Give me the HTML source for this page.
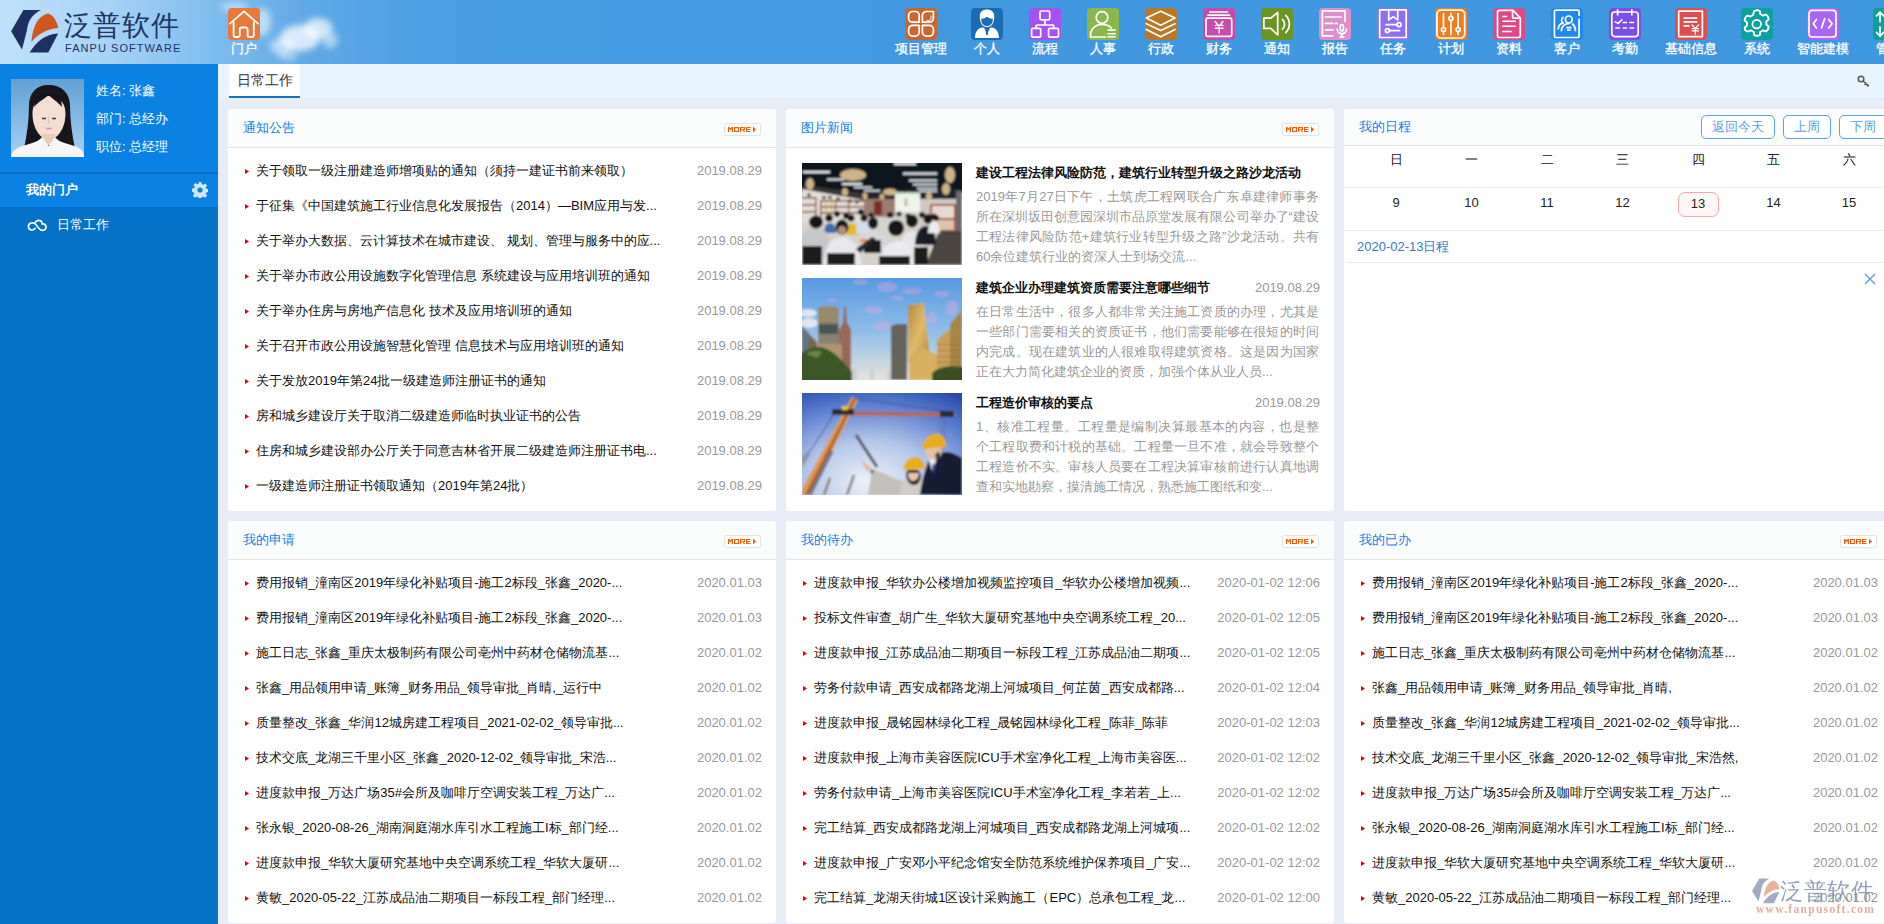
<!DOCTYPE html><html><head><meta charset="utf-8"><style>
*{margin:0;padding:0;box-sizing:border-box}
html,body{width:1884px;height:924px;overflow:hidden;background:#e8ecf6;font-family:"Liberation Sans",sans-serif;font-size:13px;color:#222}
#hdr{position:absolute;left:0;top:0;width:1884px;height:64px;background:linear-gradient(90deg,#c0e1fa 0px,#a9d4f6 100px,#84bfef 200px,#62aae7 300px,#4c9fe3 420px,#4499e0 650px,#3f97df 1884px);overflow:hidden}
.cloud{position:absolute;border-radius:50%;background:radial-gradient(closest-side,rgba(255,255,255,.85),rgba(255,255,255,0))}
.logoTxt{position:absolute;left:64px;top:9px;font-size:28px;color:#1e3466;letter-spacing:1px;font-weight:500;line-height:34px}
.logoEn{position:absolute;left:65px;top:42px;font-size:11px;color:#1e3466;letter-spacing:1.05px;line-height:13px}
.nav{position:absolute;top:0;height:64px}
.nav .ic{position:absolute;left:50%;margin-left:-16px;top:8px;width:32px;height:32px;border-radius:4px}
.nav .ic svg{display:block}
.nav .nl{position:absolute;left:-10px;right:-10px;top:41px;text-align:center;color:#fff;font-size:12.5px;-webkit-text-stroke:.3px #fff;line-height:16px;white-space:nowrap}
#side{position:absolute;left:0;top:64px;width:218px;height:860px;background:#0571c7}
#side .top{position:absolute;left:0;top:0;width:218px;height:110px;background:#0a82e4;border-bottom:2px solid #0a6cbd}
#side .port{position:absolute;left:0;top:110px;width:218px;height:33px;background:#0a82e4}
#tabbar{position:absolute;left:218px;top:64px;width:1666px;height:34px;background:#e7f4fd}
.tab{position:absolute;left:229px;top:64px;width:71px;height:34px;background:#fff;border-bottom:2px solid #1673c4;font-size:14px;color:#333;text-align:center;line-height:32px}
.panel{position:absolute;background:#fff;border-radius:3px;overflow:hidden}
.ph{position:absolute;left:0;top:0;right:0;height:39px;background:#fbfdfc;border-bottom:1px solid #e6e6e6}
.pt{position:absolute;left:15px;top:0;line-height:37px;color:#1a7ee8;font-size:13px}
.more{position:absolute;top:14px}
.li{position:absolute;left:0;right:0;height:35px;line-height:35px;white-space:nowrap}
.tri{position:absolute;left:17px;top:16px;width:4px;height:5px;background:#e60000;clip-path:polygon(0 0,100% 50%,0 100%)}
.lt{position:absolute;left:28px;top:0;overflow:hidden;color:#111}
.ld{position:absolute;right:14px;top:0;color:#999}

.cbtn{position:absolute;top:6px;height:24px;border:1px solid #5aa3ea;border-radius:5px;color:#5aa3ea;text-align:center;line-height:22px;font-size:13px;background:#fff}
</style></head><body><div id="hdr">
<svg style="position:absolute;left:210px;top:0" width="150" height="64" viewBox="0 0 150 64"><defs><filter id="cb" x="-50%" y="-50%" width="200%" height="200%"><feGaussianBlur stdDeviation="3"/></filter></defs><g fill="#fff" filter="url(#cb)"><ellipse cx="25" cy="7" rx="14" ry="5" opacity=".45"/><ellipse cx="52" cy="22" rx="9" ry="14" opacity=".55"/><ellipse cx="90" cy="38" rx="20" ry="13" opacity=".75"/><ellipse cx="108" cy="28" rx="14" ry="10" opacity=".7"/><ellipse cx="72" cy="46" rx="12" ry="8" opacity=".55"/><ellipse cx="78" cy="56" rx="10" ry="5" opacity=".4"/><ellipse cx="120" cy="40" rx="8" ry="8" opacity=".5"/></g></svg>
<svg style="position:absolute;left:0;top:0" width="64" height="64" viewBox="0 0 64 64"><path fill="#1e3060" d="M23.4 10H41C33 14 28 20 27 30L22 49.4 11.1 31.3Z"/><path fill="#d0561e" d="M31.3 42C33 26 38 16 48 13.6 53 15 57 21 58.2 28 47 29 38 34 31.3 42Z"/><path fill="#1e3060" d="M29.7 52.5H48.3L58.2 33.4C45 34 36 42 29.7 52.5Z"/></svg>
<div class="logoTxt">泛普软件</div><div class="logoEn">FANPU SOFTWARE</div>
<div class="nav" style="left:218px;width:52px"><div class="ic" style="background:#e8793c;border-radius:4px"><svg width="32" height="32" viewBox="0 0 32 32"><g fill="none" stroke="#fff" stroke-width="1.8" stroke-linejoin="round" stroke-linecap="round"><path d="M2 15.6L16 3.4l14 12.2"/><path d="M5.6 14.5V27a2 2 0 0 0 2 2h2.4a1.8 1.8 0 0 0 1.8-1.8V21.3a1.8 1.8 0 0 1 1.8-1.8h4.2a1.8 1.8 0 0 1 1.8 1.8v5.9a1.8 1.8 0 0 0 1.8 1.8h2.4a2 2 0 0 0 2-2V14.5"/></g></svg></div><div class="nl">门户</div></div>
<div class="nav" style="left:884px;width:74px"><div class="ic" style="background:#cb6631"><svg width="32" height="32" viewBox="0 0 32 32"><g fill="none" stroke="#fff" stroke-width="1.7" stroke-linecap="round" stroke-linejoin="round" stroke-width="1.6"><path d="M3.6 7.5a4 4 0 0 1 4-4h2.6a4 4 0 0 1 4 4v6.7H7.6a4 4 0 0 1-4-4z"/><path d="M17.4 7.5a4 4 0 0 1 4-4h7v6.7a4 4 0 0 1-4 4h-7z"/><path d="M3.6 21.4a4 4 0 0 1 4-4h6.6v6.7a4 4 0 0 1-4 4H7.6a4 4 0 0 1-4-4z"/><path d="M17.4 17.4h7a4 4 0 0 1 4 4v2.7a4 4 0 0 1-4 4h-3a4 4 0 0 1-4-4z"/><path d="M26 8v2.5a2 2 0 0 1-2 2h-2" stroke-width=".9"/></g></svg></div><div class="nl">项目管理</div></div>
<div class="nav" style="left:958px;width:58px"><div class="ic" style="background:#1c6cb4"><svg width="32" height="32" viewBox="0 0 32 32"><path fill="#fff" d="M16 1.5c-4.4 0-7.2 2.6-7.2 6.4v2.6c0 .9.2 1.6.5 2.2.5 3.5 3 6.3 6.7 6.3s6.2-2.8 6.7-6.3c.3-.6.5-1.3.5-2.2V7.9c0-3.8-2.8-6.4-7.2-6.4z"/><path fill="#1c6cb4" d="M10.3 10.6c1.6.4 3.6-.3 5.7-1.8 2.1 1.5 4.1 2.2 5.7 1.8v1.6c0 3.2-2.3 5.8-5.7 5.8s-5.7-2.6-5.7-5.8z"/><path fill="#fff" d="M4 30c.3-5 1.6-8.4 5.6-10.2l3.4-.2 3 7.2 3-7.2 3.4.2c4 1.8 5.3 5.2 5.6 10.2z"/><path fill="#1c6cb4" d="M14.6 19.8h2.8l-.6 2 .4 4.2-1.2 1.6-1.2-1.6.4-4.2z"/></svg></div><div class="nl">个人</div></div>
<div class="nav" style="left:1016px;width:58px"><div class="ic" style="background:#a452f2"><svg width="32" height="32" viewBox="0 0 32 32"><g fill="none" stroke="#fff" stroke-width="1.7" stroke-linecap="round" stroke-linejoin="round" stroke-width="1.8"><rect x="11" y="3" width="9.7" height="8.9" rx="1.3"/><path d="M15.9 11.9v5.1M7.2 20.4v-2.4a1 1 0 0 1 1-1h15.5a1 1 0 0 1 1 1v2.4"/><rect x="2.6" y="20.4" width="9.1" height="8.8" rx="1.3"/><rect x="19.6" y="20.4" width="9.9" height="8.8" rx="1.3"/></g></svg></div><div class="nl">流程</div></div>
<div class="nav" style="left:1074px;width:58px"><div class="ic" style="background:#8ab84c"><svg width="32" height="32" viewBox="0 0 32 32"><g fill="none" stroke="#fff" stroke-width="1.7" stroke-linecap="round" stroke-linejoin="round" stroke-width="1.7"><circle cx="15" cy="9.5" r="5.8"/><path d="M18.6 29H3.5c-.6-7.4 4.7-12.6 11.5-12.6 4 0 7.4 1.5 9.4 3.6"/></g><g fill="#fff"><rect x="20.2" y="21.2" width="8.7" height="1.7" rx=".8"/><rect x="20.2" y="24.9" width="8.7" height="1.7" rx=".8"/><rect x="20.2" y="27.9" width="8.7" height="1.7" rx=".8"/></g></svg></div><div class="nl">人事</div></div>
<div class="nav" style="left:1132px;width:58px"><div class="ic" style="background:#b87828"><svg width="32" height="32" viewBox="0 0 32 32"><g fill="none" stroke="#fff" stroke-width="1.7" stroke-linecap="round" stroke-linejoin="round" stroke-width="1.4"><path d="M15.7 3.2L30 10.1 15.7 17.2 1.3 10.1z"/><path d="M1.3 15.7l14.4 6.9 14.3-6.9"/><path d="M1.3 21.5l14.4 7.2 14.3-7.2"/></g></svg></div><div class="nl">行政</div></div>
<div class="nav" style="left:1190px;width:58px"><div class="ic" style="background:#c84aab"><svg width="32" height="32" viewBox="0 0 32 32"><g fill="none" stroke="#fff" stroke-width="1.7" stroke-linecap="round" stroke-linejoin="round" stroke-width="1.6"><rect x="3" y="10.1" width="25.7" height="18.3" rx="1.6"/><path d="M6.9 4h17.8M5 7.2h21.5"/><path d="M12.2 13.5l4 4.8 3.7-4.8M16.2 18.3V25M12.4 17.4h7.6M12.4 20.3h7.6" stroke-width="1.4"/></g></svg></div><div class="nl">财务</div></div>
<div class="nav" style="left:1248px;width:58px"><div class="ic" style="background:#6a9522"><svg width="32" height="32" viewBox="0 0 32 32"><g fill="none" stroke="#fff" stroke-width="1.7" stroke-linecap="round" stroke-linejoin="round" stroke-width="1.5"><path d="M2.9 10.1h6.9l6.9-5.6v22.5l-6.9-6.6H2.9z"/><path d="M21.5 11.4a6.5 6.5 0 0 1 0 9.6M24.7 7.4a12 12 0 0 1 0 17.3"/></g></svg></div><div class="nl">通知</div></div>
<div class="nav" style="left:1306px;width:58px"><div class="ic" style="background:#dc8fc8"><svg width="32" height="32" viewBox="0 0 32 32"><g fill="none" stroke="#fff" stroke-width="1.7" stroke-linecap="round" stroke-linejoin="round" stroke-width="1.9" stroke-linecap="butt" stroke-linejoin="miter"><path d="M26 13.5V2.9H3.4v25h10.1"/><path d="M6.4 9h15.6M6.4 15.4h7.6M6.4 21.8h7.6M16.5 15.4h1.8"/></g><g fill="none" stroke="#fff" stroke-width="1.7" stroke-linecap="round" stroke-linejoin="round" stroke-width="1.5"><rect x="21.2" y="16.7" width="3.2" height="6.3" rx="1.6"/><path d="M18.2 21a4.6 4.6 0 0 0 9.3 0M22.8 25.6v2.8M21 29h3.8"/></g></svg></div><div class="nl">报告</div></div>
<div class="nav" style="left:1364px;width:58px"><div class="ic" style="background:#8f6ef4"><svg width="32" height="32" viewBox="0 0 32 32"><g fill="none" stroke="#fff" stroke-width="1.7" stroke-linecap="round" stroke-linejoin="round" stroke-width="1.9" stroke-linecap="butt" stroke-linejoin="miter"><rect x="2.7" y="1.8" width="26.5" height="27.7"/><path d="M11.7 1.8v10.1l4.5-3.1 4.5 3.1V1.8"/></g><g fill="none" stroke="#fff" stroke-width="1.7" stroke-linecap="round" stroke-linejoin="round" stroke-width="1.5"><path d="M9 16.7h11M12.4 22.6h10.2"/><circle cx="22" cy="16.7" r="2"/><circle cx="10.4" cy="22.6" r="2"/></g></svg></div><div class="nl">任务</div></div>
<div class="nav" style="left:1422px;width:58px"><div class="ic" style="background:#f07e1e"><svg width="32" height="32" viewBox="0 0 32 32"><g fill="none" stroke="#fff" stroke-width="1.7" stroke-linecap="round" stroke-linejoin="round" stroke-width="1.9"><rect x="1.9" y="2.1" width="27.8" height="27.9" rx="4"/></g><g fill="none" stroke="#fff" stroke-width="1.7" stroke-linecap="round" stroke-linejoin="round" stroke-width="1.3"><path d="M8.5 5.6v13.8M8.5 23.5v3M15.9 5.6v2.8M15.9 12.4v14.1M23.1 5.6v13.8M23.1 23.5v3"/><circle cx="8.5" cy="21.5" r="2"/><circle cx="15.9" cy="10.4" r="2"/><circle cx="23.1" cy="21.5" r="2"/></g></svg></div><div class="nl">计划</div></div>
<div class="nav" style="left:1480px;width:58px"><div class="ic" style="background:#dc4a88"><svg width="32" height="32" viewBox="0 0 32 32"><g fill="none" stroke="#fff" stroke-width="1.7" stroke-linecap="round" stroke-linejoin="round" stroke-width="1.8"><path d="M6.5 2.4h13.7l7.1 7.7v17.4a2 2 0 0 1-2 2H6.5a2 2 0 0 1-2-2V4.4a2 2 0 0 1 2-2z"/><path d="M19.6 2.6v6.5a1 1 0 0 0 1 1h6.5"/><path d="M9.8 8.5h3.7M9.8 13.3h12.5M9.8 18.3h12.5M9.8 23.4h8.5" stroke-width="1.5"/></g></svg></div><div class="nl">资料</div></div>
<div class="nav" style="left:1538px;width:58px"><div class="ic" style="background:#2088f0"><svg width="32" height="32" viewBox="0 0 32 32"><g fill="none" stroke="#fff" stroke-width="1.7" stroke-linecap="round" stroke-linejoin="round" stroke-width="1.7" stroke-linecap="butt"><path d="M28.1 7.2V3.6a1.5 1.5 0 0 0-1.5-1.5H4.9a1.5 1.5 0 0 0-1.5 1.5V28a1.5 1.5 0 0 0 1.5 1.5h21.7a1.5 1.5 0 0 0 1.5-1.5V11.4"/></g><g fill="none" stroke="#fff" stroke-width="1.7" stroke-linecap="round" stroke-linejoin="round" stroke-width="1.4"><circle cx="17.8" cy="11.4" r="3.4"/><path d="M10.4 22.6a7.6 7.6 0 0 1 7.4-7.3M21.5 16a8 8 0 0 1 2.9 6.6M7.2 20.7a7 7 0 0 1 5-5.8M12 9.4a3.6 3.6 0 0 0-.6 5M15.9 19.6h4M16.6 22h2.6"/></g></svg></div><div class="nl">客户</div></div>
<div class="nav" style="left:1596px;width:58px"><div class="ic" style="background:#7a4ee8"><svg width="32" height="32" viewBox="0 0 32 32"><g fill="none" stroke="#fff" stroke-width="1.7" stroke-linecap="round" stroke-linejoin="round" stroke-width="1.9"><rect x="2.8" y="4" width="26.4" height="24.6" rx="3"/><path d="M8.6 1.8v5M22.8 1.8v5"/><path d="M6.2 13.9l3 1.5 3.7-3.7" stroke-width="1.6"/><path d="M14.2 14.5h3.3M20.9 14.5h3.7M6.8 20h3.7M14.2 20h3.3M20.9 20h3.7" stroke-width="1.6"/></g></svg></div><div class="nl">考勤</div></div>
<div class="nav" style="left:1654px;width:74px"><div class="ic" style="background:#de4e4e"><svg width="32" height="32" viewBox="0 0 32 32"><g fill="none" stroke="#fff" stroke-width="1.7" stroke-linecap="round" stroke-linejoin="round" stroke-width="2.1" stroke-linecap="butt" stroke-linejoin="miter"><rect x="3.7" y="3.1" width="23.7" height="25.5"/></g><g fill="none" stroke="#fff" stroke-width="1.7" stroke-linecap="round" stroke-linejoin="round" stroke-width="1.6"><path d="M9.2 10.2h12.4M9.2 13.9h12.4M9.2 17.9h4.7"/><path d="M16.9 16.9l3.4 3.4 3.4-3.4M20.3 20.3v5.9M17.2 20.6h6.3M17.2 22.8h6.3" stroke-width="1.3"/></g></svg></div><div class="nl">基础信息</div></div>
<div class="nav" style="left:1728px;width:58px"><div class="ic" style="background:#0ea09e"><svg width="32" height="32" viewBox="0 0 32 32"><g fill="none" stroke="#fff" stroke-width="1.7" stroke-linecap="round" stroke-linejoin="round" stroke-width="1.5"><path d="M13.2 3.4c1.6-.9 3.6-.9 5.2 0l.4 2.8c.9.3 1.7.8 2.4 1.4l2.6-1c1.6.9 2.6 2.6 2.6 4.5l-2.2 1.8c.2.9.2 1.9 0 2.8l2.2 1.8c0 1.9-1 3.6-2.6 4.5l-2.6-1c-.7.6-1.5 1.1-2.4 1.4l-.4 2.8c-1.6.9-3.6.9-5.2 0l-.4-2.8c-.9-.3-1.7-.8-2.4-1.4l-2.6 1C5.6 22 4.6 20.3 4.6 18.4l2.2-1.8c-.2-.9-.2-1.9 0-2.8L4.6 12c0-1.9 1-3.6 2.6-4.5l2.6 1c.7-.6 1.5-1.1 2.4-1.4z" transform="translate(16 16) scale(1.1) translate(-15.8 -15.2)"/><circle cx="15.7" cy="16.1" r="4.3"/></g></svg></div><div class="nl">系统</div></div>
<div class="nav" style="left:1786px;width:74px"><div class="ic" style="background:#a866f6"><svg width="32" height="32" viewBox="0 0 32 32"><g fill="none" stroke="#fff" stroke-width="1.7" stroke-linecap="round" stroke-linejoin="round" stroke-width="2.3"><rect x="2" y="2.4" width="27" height="26.6" rx="3"/></g><g fill="none" stroke="#fff" stroke-width="1.7" stroke-linecap="round" stroke-linejoin="round" stroke-width="1.7"><path d="M9.4 11.4L6.3 15.7l3.1 4.3M21.6 11.4l3.5 4.3-3.5 4.3M17.7 10.6L14.5 20"/></g></svg></div><div class="nl">智能建模</div></div>
<div class="nav" style="left:1860px;width:58px"><div class="ic" style="background:#0ea094"><svg width="32" height="32" viewBox="0 0 32 32"><g fill="none" stroke="#fff" stroke-width="1.7" stroke-linecap="round" stroke-linejoin="round" stroke-width="1.8"><path d="M7 4v9.7M3.5 7.9L7 4l3.6 3.9M7 18.9v9.4M3.5 24.4L7 28.3l3.6-3.9"/></g></svg></div><div class="nl">管理</div></div>
</div>
<div id="side"><div class="top"></div><div class="port"></div>
<svg style="position:absolute;left:11px;top:15px" width="73" height="78" viewBox="0 0 73 78"><defs><linearGradient id="avbg" x1="0" y1="0" x2="0" y2="1"><stop offset="0" stop-color="#62a0d4"/><stop offset="1" stop-color="#a6d2f4"/></linearGradient><filter id="avb" x="0" y="0" width="100%" height="100%"><feGaussianBlur stdDeviation=".6"/></filter></defs><rect width="73" height="78" fill="url(#avbg)"/><g filter="url(#avb)"><path fill="#17121a" d="M37.5 6C25 6 18 14 18 27c0 14-2 28-5 43l12 1h26l13-1c-3-15-5-29-5-43 0-13-8-21-21.5-21z"/><path fill="#f4ddd2" d="M37.5 17c-4 0-7 2-9 3-5 3-7 8-7 15 0 13 7 25 16.5 26 9.5-1 16.5-13 16.5-26 0-7-2-12-7-15-2-1-5-3-10-3z"/><path fill="#17121a" d="M37 16c-3 4-9 6-14 12l1-8c4-3 9-5 13-4zM38 16c3 4 8 6 13 12l-1-8c-4-3-8-5-12-4z"/><path fill="#eccabc" d="M31 55h13v11H31z"/><path fill="#f6f6f8" d="M0 78c1-7 7-10 18-13 7-2 11-4 13-7l6.5 9 6.5-9c2 3 6 5 13 7 11 3 16 6 16 13z"/><path d="M31 39.5h4M41 39.5h4" stroke="#4a3a3a" stroke-width="1.3"/><path d="M35 49.5h6" stroke="#e0959a" stroke-width="1.5"/><path d="M37.5 37v8" stroke="#e6c4b8" stroke-width="1.2"/></g></svg>
<div style="position:absolute;left:96px;top:13px;color:#fff;font-size:13px;line-height:28px">姓名: 张鑫<br>部门: 总经办<br>职位: 总经理</div>
<div style="position:absolute;left:26px;top:109px;line-height:33px;color:#fff;font-weight:bold;font-size:13px">我的门户</div>
<svg style="position:absolute;left:192px;top:118px" width="16" height="16" viewBox="0 0 16 16"><path fill="#cfe6fb" d="M6.6 0h2.8l.4 2.2 1.4.6 1.9-1.3 2 2-1.3 1.9.6 1.4 2.2.4v2.8l-2.2.4-.6 1.4 1.3 1.9-2 2-1.9-1.3-1.4.6-.4 2.2H6.6l-.4-2.2-1.4-.6-1.9 1.3-2-2 1.3-1.9-.6-1.4L0 9.4V6.6l2.2-.4.6-1.4-1.3-1.9 2-2 1.9 1.3 1.4-.6z"/><circle cx="8" cy="8" r="2.6" fill="#0a82e4"/></svg>
<svg style="position:absolute;left:24px;top:150px" width="28" height="22" viewBox="0 0 28 22"><path fill="none" stroke="#fff" stroke-width="1.7" stroke-linecap="round" d="M11.4 14.3C9 17 4.4 16.5 4.4 12.6 4.4 8.5 9.5 7.8 11.8 10.5L15.5 15C17.5 17 22 17 22 13 22 10.5 20 9.7 18.3 10 18 7 16.7 6.3 14.5 6.3 13 6.3 12 7 11.3 8.5"/></svg>
<div style="position:absolute;left:57px;top:145px;line-height:32px;color:#fff;font-size:13.4px">日常工作</div>
</div>
<div id="tabbar"></div><div class="tab">日常工作</div>
<svg style="position:absolute;left:1857px;top:75px" width="14" height="12" viewBox="0 0 14 12"><g fill="none" stroke="#555" stroke-width="1.5"><circle cx="4" cy="4" r="2.8"/><path d="M6 6l6 5M9 8.5l-1.5 1.5M11 10l-1.2 1.2"/></g></svg>
<div class="panel" style="left:228px;top:109px;width:548px;height:402px"><div class="ph"><div class="pt">通知公告</div><svg class="more" style="left:496px" width="37" height="13" viewBox="0 0 37 13"><rect x="0.5" y="0.5" width="36" height="12" rx="2" fill="#fff" stroke="#e2e2e2"/><g fill="#ff5a00"><path d="M4 4h1.2l1.3 1.5L7.8 4H9v5H7.8V5.8L6.5 7.2 5.2 5.8V9H4z"/><path d="M10 4h5v5h-5zM11.2 5v3h2.6V5z"/><path d="M16 4h5v3h-1l1 2h-1.3l-1-2H17.2v2H16zM17.2 5v1.2h2.6V5z"/><path d="M22 4h4.5v1h-3.3v1h3v1h-3v1h3.3v1H22z"/><path d="M29 3.5l3 3-3 3z"/></g></svg></div><div class="li" style="top:44px"><i class="tri"></i><span class="lt">关于领取一级注册建造师增项贴的通知（须持一建证书前来领取）</span><span class="ld">2019.08.29</span></div><div class="li" style="top:79px"><i class="tri"></i><span class="lt">于征集《中国建筑施工行业信息化发展报告（2014）—BIM应用与发...</span><span class="ld">2019.08.29</span></div><div class="li" style="top:114px"><i class="tri"></i><span class="lt">关于举办大数据、云计算技术在城市建设、 规划、管理与服务中的应...</span><span class="ld">2019.08.29</span></div><div class="li" style="top:149px"><i class="tri"></i><span class="lt">关于举办市政公用设施数字化管理信息 系统建设与应用培训班的通知</span><span class="ld">2019.08.29</span></div><div class="li" style="top:184px"><i class="tri"></i><span class="lt">关于举办住房与房地产信息化 技术及应用培训班的通知</span><span class="ld">2019.08.29</span></div><div class="li" style="top:219px"><i class="tri"></i><span class="lt">关于召开市政公用设施智慧化管理 信息技术与应用培训班的通知</span><span class="ld">2019.08.29</span></div><div class="li" style="top:254px"><i class="tri"></i><span class="lt">关于发放2019年第24批一级建造师注册证书的通知</span><span class="ld">2019.08.29</span></div><div class="li" style="top:289px"><i class="tri"></i><span class="lt">房和城乡建设厅关于取消二级建造师临时执业证书的公告</span><span class="ld">2019.08.29</span></div><div class="li" style="top:324px"><i class="tri"></i><span class="lt">住房和城乡建设部办公厅关于同意吉林省开展二级建造师注册证书电...</span><span class="ld">2019.08.29</span></div><div class="li" style="top:359px"><i class="tri"></i><span class="lt">一级建造师注册证书领取通知（2019年第24批）</span><span class="ld">2019.08.29</span></div></div>
<div class="panel" style="left:786px;top:109px;width:548px;height:402px"><div class="ph"><div class="pt">图片新闻</div><svg class="more" style="left:496px" width="37" height="13" viewBox="0 0 37 13"><rect x="0.5" y="0.5" width="36" height="12" rx="2" fill="#fff" stroke="#e2e2e2"/><g fill="#ff5a00"><path d="M4 4h1.2l1.3 1.5L7.8 4H9v5H7.8V5.8L6.5 7.2 5.2 5.8V9H4z"/><path d="M10 4h5v5h-5zM11.2 5v3h2.6V5z"/><path d="M16 4h5v3h-1l1 2h-1.3l-1-2H17.2v2H16zM17.2 5v1.2h2.6V5z"/><path d="M22 4h4.5v1h-3.3v1h3v1h-3v1h3.3v1H22z"/><path d="M29 3.5l3 3-3 3z"/></g></svg></div><div style="position:absolute;left:16px;top:54px;width:160px;height:102px;overflow:hidden"><svg width="160" height="102" viewBox="0 0 160 102"><defs><filter id="b1" x="0" y="0" width="100%" height="100%"><feGaussianBlur stdDeviation="0.9"/></filter></defs><g filter="url(#b1)"><rect x="-4" y="-4" width="168" height="110" fill="#d6d2cc"/><rect x="-4" y="-4" width="168" height="34" fill="#10141b"/><path d="M0 22L62 30 62 38 0 28z" fill="#3a3634"/><path d="M62 26H160V36H62z" fill="#22242a"/><g fill="#e9eef6"><rect x="1" y="8" width="27" height="2.2"/><rect x="25" y="15.5" width="17" height="2"/><rect x="40" y="20" width="20" height="2"/><rect x="52" y="23.5" width="18" height="1.8"/><rect x="62" y="27" width="16" height="1.5"/><rect x="101" y="9.5" width="34" height="2.2"/><rect x="107" y="16.5" width="28" height="2"/><rect x="111" y="20.5" width="24" height="2"/><rect x="115" y="24.5" width="20" height="1.8"/><rect x="117" y="27.5" width="18" height="1.5"/><rect x="92" y="0" width="22" height="2"/></g><g fill="#cdb38a"><ellipse cx="51" cy="12" rx="13" ry="6"/><ellipse cx="8" cy="21" rx="4" ry="6"/><ellipse cx="43" cy="29" rx="3" ry="4"/><ellipse cx="148" cy="12" rx="5" ry="8"/><ellipse cx="144" cy="26" rx="4" ry="6"/><ellipse cx="88" cy="29" rx="7" ry="3.5"/><ellipse cx="63" cy="33" rx="2.5" ry="3.5"/><ellipse cx="80" cy="34" rx="2.5" ry="3.5"/><ellipse cx="127" cy="33" rx="3" ry="4"/></g><path d="M0 26L62 37V60H0z" fill="#e2deda"/><g fill="#8c4a2c"><rect x="0" y="34" width="14" height="1.6"/><rect x="0" y="41" width="14" height="1.6"/><rect x="0" y="48" width="14" height="1.6"/><rect x="18" y="37" width="44" height="1.6"/><rect x="18" y="43" width="44" height="1.6"/><rect x="18" y="49" width="44" height="1.6"/><rect x="13" y="34" width="1.4" height="20"/><rect x="18" y="37" width="1.4" height="18"/><rect x="33" y="38" width="1.2" height="16"/><rect x="46" y="39" width="1.2" height="15"/></g><g fill="#4a3a32"><circle cx="7" cy="32" r="1.8"/><circle cx="22" cy="34.5" r="1.8"/><circle cx="28" cy="34.5" r="1.8"/><circle cx="36" cy="36" r="1.8"/><circle cx="48" cy="38" r="1.8"/><circle cx="55" cy="39" r="1.8"/></g><g fill="#e2c030"><rect x="23" y="39" width="1.5" height="4"/><rect x="29" y="39" width="1.5" height="4"/><rect x="23" y="45" width="1.5" height="4"/><rect x="29" y="45" width="1.5" height="4"/></g><rect x="62" y="36" width="31" height="18" fill="#9a7e70"/><rect x="72" y="38" width="8" height="14" fill="#7a2e28"/><rect x="93" y="29" width="25" height="20" fill="#eef3ec"/><rect x="93" y="29" width="25" height="2" fill="#b4d0a4"/><circle cx="104" cy="37" r="1.5" fill="#8ab870"/><circle cx="104" cy="41" r="2" fill="#e0a870"/><rect x="118" y="36" width="36" height="32" fill="#d0c8c0"/><rect x="128" y="41" width="26" height="28" fill="#a0503a"/><rect x="130" y="43" width="22" height="12" fill="#e6dad0"/><rect x="130" y="57" width="22" height="10" fill="#dac4aa"/><rect x="154" y="28" width="6" height="74" fill="#6a6a6c"/><path d="M137 68H160V102H124z" fill="#4c4442"/><g fill="#161616"><circle cx="35" cy="51" r="3"/><circle cx="44" cy="53" r="3"/><circle cx="59" cy="49" r="3"/><circle cx="69" cy="52" r="2.5"/><circle cx="88" cy="52" r="3"/><circle cx="97" cy="51" r="2.5"/><circle cx="106" cy="53" r="2.5"/><circle cx="120" cy="52" r="3"/><circle cx="132" cy="53" r="2.5"/></g><path d="M22 70c0-7 3-10 6-10s6 3 6 10z" fill="#3e6ca6"/><circle cx="27" cy="55" r="3.8" fill="#161616"/><path d="M45 72c0-8 2-12 5-12s6 4 6 12z" fill="#e2bc1c"/><circle cx="49" cy="55" r="3.5" fill="#161616"/><path d="M54 70c0-8 3-11 7-11s7 3 7 11z" fill="#d4dcea"/><circle cx="62" cy="55" r="3.5" fill="#161616"/><path d="M84 62c1-4 4-6 8-6s7 2 8 6v8H84z" fill="#d8dde6"/><path d="M60 86c0-12 5-19 12-19s12 7 12 19z" fill="#d6d8dc"/><ellipse cx="71" cy="60" rx="5" ry="6" fill="#151515"/><path d="M98 90c0-14 5-22 12-22s12 8 12 22z" fill="#e6e6ea"/><ellipse cx="110" cy="58" rx="6" ry="6.5" fill="#151515"/><path d="M113 82c0-12 5-19 11-19s10 7 10 19z" fill="#1c1e26"/><ellipse cx="126" cy="56" rx="4.5" ry="5" fill="#151515"/><path d="M126 70c0-8 3-12 6-12s6 4 6 12z" fill="#ececf0"/><circle cx="134" cy="55" r="3" fill="#151515"/><path d="M0 95V72c2-5 8-7 14-7 7 0 12 4 13 10v20z" fill="#c6c7ca"/><ellipse cx="14" cy="59" rx="7" ry="6.5" fill="#141414"/><path d="M22 102c0-17 6-28 18-28s19 11 19 28z" fill="#e8e8ec"/><ellipse cx="40" cy="64" rx="6.5" ry="7.5" fill="#141414"/><ellipse cx="40" cy="67" rx="4" ry="4" fill="#b89080"/><path d="M78 102c0-15 7-24 17-24s17 9 17 24z" fill="#ebebef"/><ellipse cx="94" cy="65" rx="8" ry="8" fill="#141414"/><g fill="#1a1a1c"><rect x="0" y="83" width="20" height="19"/><rect x="25" y="90" width="28" height="12"/><rect x="62" y="77" width="17" height="13"/><rect x="77" y="93" width="31" height="9"/><rect x="112" y="84" width="14" height="18"/></g><path d="M54 86L70 74 74 76 58 90z" fill="#2a2a2e"/><rect x="58" y="76" width="6" height="3" fill="#e88a3a"/></g></svg></div><div style="position:absolute;left:190px;top:54px;width:343px;line-height:20px;font-weight:bold;color:#111;white-space:nowrap">建设工程法律风险防范，建筑行业转型升级之路沙龙活动</div><div style="position:absolute;left:190px;top:78px;width:343px;line-height:20px;color:#999;text-align:justify">2019年7月27日下午，土筑虎工程网联合广东卓建律师事务所在深圳坂田创意园深圳市品原堂发展有限公司举办了“建设工程法律风险防范+建筑行业转型升级之路”沙龙活动。共有60余位建筑行业的资深人士到场交流...</div><div style="position:absolute;left:16px;top:169px;width:160px;height:102px;overflow:hidden"><svg width="160" height="102" viewBox="0 0 160 102"><defs><linearGradient id="sky2" x1="0" y1="0" x2="0" y2="1"><stop offset="0" stop-color="#5496e0"/><stop offset=".5" stop-color="#8cbce8"/><stop offset="1" stop-color="#ece6da"/></linearGradient><linearGradient id="gold2" x1="0" y1="0" x2="1" y2="1"><stop offset="0" stop-color="#b08838"/><stop offset=".5" stop-color="#e0bc6a"/><stop offset="1" stop-color="#a88440"/></linearGradient><filter id="b2" x="0" y="0" width="100%" height="100%"><feGaussianBlur stdDeviation="0.9"/></filter></defs><g filter="url(#b2)"><rect x="-4" y="-4" width="168" height="110" fill="url(#sky2)"/><g fill="#e6aae0" opacity=".38"><ellipse cx="85" cy="9" rx="10" ry="5"/><ellipse cx="140" cy="16" rx="8" ry="3"/><ellipse cx="110" cy="13" rx="10" ry="3"/><ellipse cx="72" cy="32" rx="9" ry="4"/><ellipse cx="150" cy="30" rx="6" ry="8"/><ellipse cx="58" cy="4" rx="7" ry="3"/><ellipse cx="80" cy="48" rx="9" ry="5"/><ellipse cx="30" cy="22" rx="4" ry="2"/><ellipse cx="130" cy="40" rx="5" ry="6"/><ellipse cx="95" cy="20" rx="6" ry="2"/></g><g fill="#f6f2f2" opacity=".8"><ellipse cx="6" cy="35" rx="9" ry="4"/><ellipse cx="7" cy="45" rx="9" ry="5"/></g><path d="M16 30q10-4 21 0V82H16z" fill="#8a8270"/><path d="M16 30q10-4 21 0V44H16z" fill="#9a8a6c"/><path d="M17 46H36V56H17z" fill="#4a5652"/><path d="M37 52l4-8 1-14 1-3 1 3 1 14 4 8V96H37z" fill="#96685a"/><path d="M0 48l9 10 6 6V102H0z" fill="#76684e"/><path d="M2 52l4 3v32H2z" fill="#5a7890"/><path d="M15 66H40V90H15z" fill="#b09470"/><path d="M89 48l6-2H105V102H89z" fill="#66645a"/><path d="M106 27L122 25 128 80 106 85z" fill="url(#gold2)"/><path d="M107 80l5-7 4 2 5-5 15 7V102H107z" fill="#d8b060"/><path d="M135 62l8-8 17-8V102H135z" fill="#c8a05a"/><path d="M148 46l12-14V102H148z" fill="#a88444"/><g fill="#8a6a38" opacity=".5"><rect x="135" y="66" width="25" height="1"/><rect x="135" y="72" width="25" height="1"/><rect x="135" y="78" width="25" height="1"/><rect x="135" y="84" width="25" height="1"/></g><path d="M-4 78c8-8 22-12 30-6 6 2 12 8 24 22V106H-4z" fill="#3e5628"/><path d="M4 76c6-4 12-4 16-2l-4 6z" fill="#6a8444"/><path d="M130 95c6-6 16-8 34-6V106H130z" fill="#3a5022"/><path d="M50 90h5V102H50zM68 89h4V102H68zM85 92h4V102H85z" fill="#cdd0d4"/></g></svg></div><div style="position:absolute;left:190px;top:169px;width:343px;line-height:20px;font-weight:bold;color:#111;white-space:nowrap">建筑企业办理建筑资质需要注意哪些细节</div><div style="position:absolute;right:14px;top:169px;line-height:20px;color:#999">2019.08.29</div><div style="position:absolute;left:190px;top:193px;width:343px;line-height:20px;color:#999;text-align:justify">在日常生活中，很多人都非常关注施工资质的办理，尤其是一些部门需要相关的资质证书，他们需要能够在很短的时间内完成。现在建筑业的人很难取得建筑资格。这是因为国家正在大力简化建筑企业的资质，加强个体从业人员...</div><div style="position:absolute;left:16px;top:284px;width:160px;height:102px;overflow:hidden"><svg width="160" height="102" viewBox="0 0 160 102"><defs><radialGradient id="sky3" cx=".42" cy=".85" r=".95"><stop offset="0" stop-color="#eef2fa"/><stop offset=".4" stop-color="#b4c6e8"/><stop offset=".75" stop-color="#5a7ed0"/><stop offset="1" stop-color="#2a4aa8"/></radialGradient><filter id="b3" x="0" y="0" width="100%" height="100%"><feGaussianBlur stdDeviation="0.9"/></filter></defs><g filter="url(#b3)"><rect x="-4" y="-4" width="168" height="110" fill="url(#sky3)"/><path d="M0 70L33 20" stroke="#3a4a78" stroke-width=".9"/><path d="M56 6L150 19" stroke="#34407a" stroke-width=".6"/><path d="M50 4L56 7 8 102H0V96z" fill="#dc9a52"/><path d="M52 5L54 6 6 102H3z" fill="#a85a28"/><path d="M32 18L153 19.5 153 23.5 32 22z" fill="#b8684a"/><rect x="30" y="16" width="22" height="6" fill="#2a2a30"/><rect x="40" y="13" width="6" height="4" fill="#e8c020"/><rect x="138" y="18" width="14" height="6" fill="#2a2a30"/><path d="M140 23V60M143 23V55" stroke="#5a6080" stroke-width=".6"/><path d="M0 64L6 58 8 62 0 74z" fill="#8a94a8"/><path d="M8 102L30 58" stroke="#6a7284" stroke-width="3"/><path d="M54 42L75 74" stroke="#4e5464" stroke-width="3"/><path d="M22 102L28 85M45 102L52 82" stroke="#8a7e76" stroke-width="2.5"/><path d="M70 76c8 2 22 10 36 14l-2 12H66z" fill="#c4c0bc"/><path d="M70 76l-2 4 4 0z" fill="#333"/><path d="M58 67l9 6 3 4-5 1z" fill="#e4b8a0"/><path d="M98 102c0-8 2-14 6-16l14-2c8 2 12 8 12 18z" fill="#d0ccc8"/><path d="M104 80c0 8 4 12 8 12 4 0 7-4 7-11l-3-4h-10z" fill="#1c1a1e"/><path d="M106 80c0 5 2 8 5 8s6-3 6-8z" fill="#e8c4aa"/><path d="M101 77c1-8 6-13 12-13 6 0 10 5 10 12z" fill="#e6ae1e"/><path d="M118 102c2-16 6-28 10-38 6-4 12-5 18-5 6 1 10 4 14 6V102z" fill="#141a30"/><path d="M126 64l5-2 3 6-4 10z" fill="#eef0f6"/><path d="M131 70l2 4-2 8-1-8z" fill="#3050a0"/><path d="M123 57c0 6 4 10 9 10 4 0 7-3 8-8l-1-6h-15z" fill="#e6c0a4"/><path d="M133 62l4-4 1 6-3 3z" fill="#1c2a40"/><path d="M120 56c1-9 7-15 14-15 7 0 10 5 10 13z" fill="#e6ae1e"/></g></svg></div><div style="position:absolute;left:190px;top:284px;width:343px;line-height:20px;font-weight:bold;color:#111;white-space:nowrap">工程造价审核的要点</div><div style="position:absolute;right:14px;top:284px;line-height:20px;color:#999">2019.08.29</div><div style="position:absolute;left:190px;top:308px;width:343px;line-height:20px;color:#999;text-align:justify">1、核准工程量。工程量是编制决算最基本的内容，也是整个工程取费和计税的基础。工程量一旦不准，就会导致整个工程造价不实。审核人员要在工程决算审核前进行认真地调查和实地勘察，摸清施工情况，熟悉施工图纸和变...</div></div>
<div class="panel" style="left:1344px;top:109px;width:560px;height:402px"><div class="ph" style="height:37px"><div class="pt" style="line-height:35px">我的日程</div><div class="cbtn" style="left:357px;width:74px">返回今天</div><div class="cbtn" style="left:439px;width:48px">上周</div><div class="cbtn" style="left:495px;width:48px">下周</div></div><div style="position:absolute;left:334px;top:83px;width:41px;height:25px;border:1px solid #f7a8a8;border-radius:7px;background:#fff7f7"></div><div style="position:absolute;left:32.0px;top:37px;width:40px;line-height:28px;text-align:center;color:#222">日</div><div style="position:absolute;left:107.5px;top:37px;width:40px;line-height:28px;text-align:center;color:#222">一</div><div style="position:absolute;left:183.0px;top:37px;width:40px;line-height:28px;text-align:center;color:#222">二</div><div style="position:absolute;left:258.5px;top:37px;width:40px;line-height:28px;text-align:center;color:#222">三</div><div style="position:absolute;left:334.0px;top:37px;width:40px;line-height:28px;text-align:center;color:#222">四</div><div style="position:absolute;left:409.5px;top:37px;width:40px;line-height:28px;text-align:center;color:#222">五</div><div style="position:absolute;left:485.0px;top:37px;width:40px;line-height:28px;text-align:center;color:#222">六</div><div style="position:absolute;left:0;top:78px;width:560px;border-top:1px solid #e8e8e8"></div><div style="position:absolute;left:32.0px;top:79px;width:40px;line-height:30px;text-align:center;color:#222">9</div><div style="position:absolute;left:107.5px;top:79px;width:40px;line-height:30px;text-align:center;color:#222">10</div><div style="position:absolute;left:183.0px;top:79px;width:40px;line-height:30px;text-align:center;color:#222">11</div><div style="position:absolute;left:258.5px;top:79px;width:40px;line-height:30px;text-align:center;color:#222">12</div><div style="position:absolute;left:334.0px;top:80px;width:40px;line-height:30px;text-align:center;color:#222">13</div><div style="position:absolute;left:409.5px;top:79px;width:40px;line-height:30px;text-align:center;color:#222">14</div><div style="position:absolute;left:485.0px;top:79px;width:40px;line-height:30px;text-align:center;color:#222">15</div><div style="position:absolute;left:0;top:121px;width:560px;border-top:1px solid #e8e8e8"></div><div style="position:absolute;left:13px;top:122px;line-height:32px;color:#3a7bbf">2020-02-13日程</div><div style="position:absolute;left:3px;top:153px;width:560px;border-top:1px solid #e8e8e8"></div><svg style="position:absolute;left:520px;top:164px" width="12" height="12" viewBox="0 0 12 12"><path d="M1 1l10 10M11 1L1 11" stroke="#5a9be0" stroke-width="1.3"/></svg></div>
<div class="panel" style="left:228px;top:521px;width:548px;height:402px"><div class="ph"><div class="pt">我的申请</div><svg class="more" style="left:496px" width="37" height="13" viewBox="0 0 37 13"><rect x="0.5" y="0.5" width="36" height="12" rx="2" fill="#fff" stroke="#e2e2e2"/><g fill="#ff5a00"><path d="M4 4h1.2l1.3 1.5L7.8 4H9v5H7.8V5.8L6.5 7.2 5.2 5.8V9H4z"/><path d="M10 4h5v5h-5zM11.2 5v3h2.6V5z"/><path d="M16 4h5v3h-1l1 2h-1.3l-1-2H17.2v2H16zM17.2 5v1.2h2.6V5z"/><path d="M22 4h4.5v1h-3.3v1h3v1h-3v1h3.3v1H22z"/><path d="M29 3.5l3 3-3 3z"/></g></svg></div><div class="li" style="top:44px"><i class="tri"></i><span class="lt">费用报销_潼南区2019年绿化补贴项目-施工2标段_张鑫_2020-...</span><span class="ld">2020.01.03</span></div><div class="li" style="top:79px"><i class="tri"></i><span class="lt">费用报销_潼南区2019年绿化补贴项目-施工2标段_张鑫_2020-...</span><span class="ld">2020.01.03</span></div><div class="li" style="top:114px"><i class="tri"></i><span class="lt">施工日志_张鑫_重庆太极制药有限公司亳州中药材仓储物流基...</span><span class="ld">2020.01.02</span></div><div class="li" style="top:149px"><i class="tri"></i><span class="lt">张鑫_用品领用申请_账簿_财务用品_领导审批_肖晴,_运行中</span><span class="ld">2020.01.02</span></div><div class="li" style="top:184px"><i class="tri"></i><span class="lt">质量整改_张鑫_华润12城房建工程项目_2021-02-02_领导审批...</span><span class="ld">2020.01.02</span></div><div class="li" style="top:219px"><i class="tri"></i><span class="lt">技术交底_龙湖三千里小区_张鑫_2020-12-02_领导审批_宋浩...</span><span class="ld">2020.01.02</span></div><div class="li" style="top:254px"><i class="tri"></i><span class="lt">进度款申报_万达广场35#会所及咖啡厅空调安装工程_万达广...</span><span class="ld">2020.01.02</span></div><div class="li" style="top:289px"><i class="tri"></i><span class="lt">张永银_2020-08-26_湖南洞庭湖水库引水工程施工I标_部门经...</span><span class="ld">2020.01.02</span></div><div class="li" style="top:324px"><i class="tri"></i><span class="lt">进度款申报_华软大厦研究基地中央空调系统工程_华软大厦研...</span><span class="ld">2020.01.02</span></div><div class="li" style="top:359px"><i class="tri"></i><span class="lt">黄敏_2020-05-22_江苏成品油二期项目一标段工程_部门经理...</span><span class="ld">2020.01.02</span></div></div>
<div class="panel" style="left:786px;top:521px;width:548px;height:402px"><div class="ph"><div class="pt">我的待办</div><svg class="more" style="left:496px" width="37" height="13" viewBox="0 0 37 13"><rect x="0.5" y="0.5" width="36" height="12" rx="2" fill="#fff" stroke="#e2e2e2"/><g fill="#ff5a00"><path d="M4 4h1.2l1.3 1.5L7.8 4H9v5H7.8V5.8L6.5 7.2 5.2 5.8V9H4z"/><path d="M10 4h5v5h-5zM11.2 5v3h2.6V5z"/><path d="M16 4h5v3h-1l1 2h-1.3l-1-2H17.2v2H16zM17.2 5v1.2h2.6V5z"/><path d="M22 4h4.5v1h-3.3v1h3v1h-3v1h3.3v1H22z"/><path d="M29 3.5l3 3-3 3z"/></g></svg></div><div class="li" style="top:44px"><i class="tri"></i><span class="lt">进度款申报_华软办公楼增加视频监控项目_华软办公楼增加视频...</span><span class="ld">2020-01-02 12:06</span></div><div class="li" style="top:79px"><i class="tri"></i><span class="lt">投标文件审查_胡广生_华软大厦研究基地中央空调系统工程_20...</span><span class="ld">2020-01-02 12:05</span></div><div class="li" style="top:114px"><i class="tri"></i><span class="lt">进度款申报_江苏成品油二期项目一标段工程_江苏成品油二期项...</span><span class="ld">2020-01-02 12:05</span></div><div class="li" style="top:149px"><i class="tri"></i><span class="lt">劳务付款申请_西安成都路龙湖上河城项目_何芷茵_西安成都路...</span><span class="ld">2020-01-02 12:04</span></div><div class="li" style="top:184px"><i class="tri"></i><span class="lt">进度款申报_晟铭园林绿化工程_晟铭园林绿化工程_陈菲_陈菲</span><span class="ld">2020-01-02 12:03</span></div><div class="li" style="top:219px"><i class="tri"></i><span class="lt">进度款申报_上海市美容医院ICU手术室净化工程_上海市美容医...</span><span class="ld">2020-01-02 12:02</span></div><div class="li" style="top:254px"><i class="tri"></i><span class="lt">劳务付款申请_上海市美容医院ICU手术室净化工程_李若若_上...</span><span class="ld">2020-01-02 12:02</span></div><div class="li" style="top:289px"><i class="tri"></i><span class="lt">完工结算_西安成都路龙湖上河城项目_西安成都路龙湖上河城项...</span><span class="ld">2020-01-02 12:02</span></div><div class="li" style="top:324px"><i class="tri"></i><span class="lt">进度款申报_广安邓小平纪念馆安全防范系统维护保养项目_广安...</span><span class="ld">2020-01-02 12:02</span></div><div class="li" style="top:359px"><i class="tri"></i><span class="lt">完工结算_龙湖天街城1区设计采购施工（EPC）总承包工程_龙...</span><span class="ld">2020-01-02 12:00</span></div></div>
<div class="panel" style="left:1344px;top:521px;width:548px;height:402px"><div class="ph"><div class="pt">我的已办</div><svg class="more" style="left:496px" width="37" height="13" viewBox="0 0 37 13"><rect x="0.5" y="0.5" width="36" height="12" rx="2" fill="#fff" stroke="#e2e2e2"/><g fill="#ff5a00"><path d="M4 4h1.2l1.3 1.5L7.8 4H9v5H7.8V5.8L6.5 7.2 5.2 5.8V9H4z"/><path d="M10 4h5v5h-5zM11.2 5v3h2.6V5z"/><path d="M16 4h5v3h-1l1 2h-1.3l-1-2H17.2v2H16zM17.2 5v1.2h2.6V5z"/><path d="M22 4h4.5v1h-3.3v1h3v1h-3v1h3.3v1H22z"/><path d="M29 3.5l3 3-3 3z"/></g></svg></div><div class="li" style="top:44px"><i class="tri"></i><span class="lt">费用报销_潼南区2019年绿化补贴项目-施工2标段_张鑫_2020-...</span><span class="ld">2020.01.03</span></div><div class="li" style="top:79px"><i class="tri"></i><span class="lt">费用报销_潼南区2019年绿化补贴项目-施工2标段_张鑫_2020-...</span><span class="ld">2020.01.03</span></div><div class="li" style="top:114px"><i class="tri"></i><span class="lt">施工日志_张鑫_重庆太极制药有限公司亳州中药材仓储物流基...</span><span class="ld">2020.01.02</span></div><div class="li" style="top:149px"><i class="tri"></i><span class="lt">张鑫_用品领用申请_账簿_财务用品_领导审批_肖晴,</span><span class="ld">2020.01.02</span></div><div class="li" style="top:184px"><i class="tri"></i><span class="lt">质量整改_张鑫_华润12城房建工程项目_2021-02-02_领导审批...</span><span class="ld">2020.01.02</span></div><div class="li" style="top:219px"><i class="tri"></i><span class="lt">技术交底_龙湖三千里小区_张鑫_2020-12-02_领导审批_宋浩然,</span><span class="ld">2020.01.02</span></div><div class="li" style="top:254px"><i class="tri"></i><span class="lt">进度款申报_万达广场35#会所及咖啡厅空调安装工程_万达广...</span><span class="ld">2020.01.02</span></div><div class="li" style="top:289px"><i class="tri"></i><span class="lt">张永银_2020-08-26_湖南洞庭湖水库引水工程施工I标_部门经...</span><span class="ld">2020.01.02</span></div><div class="li" style="top:324px"><i class="tri"></i><span class="lt">进度款申报_华软大厦研究基地中央空调系统工程_华软大厦研...</span><span class="ld">2020.01.02</span></div><div class="li" style="top:359px"><i class="tri"></i><span class="lt">黄敏_2020-05-22_江苏成品油二期项目一标段工程_部门经理...</span><span class="ld">2020.01.02</span></div></div>
<div style="position:absolute;left:1750px;top:876px;width:134px;height:44px;opacity:.8"><svg style="position:absolute;left:2px;top:2px" width="28" height="26" viewBox="11 10 48 43"><path fill="#8a98b4" d="M23.4 10H41C33 14 28 20 27 30L22 49.4 11.1 31.3Z"/><path fill="#e0a080" d="M31.3 42C33 26 38 16 48 13.6 53 15 57 21 58.2 28 47 29 38 34 31.3 42Z"/><path fill="#8a98b4" d="M29.7 52.5H48.3L58.2 33.4C45 34 36 42 29.7 52.5Z"/></svg><div style="position:absolute;left:30px;top:1px;font-size:23px;line-height:28px;color:#7c8caa;letter-spacing:.5px;font-weight:500">泛普软件</div><div style="position:absolute;left:6px;top:27px;font-family:'Liberation Serif',serif;font-size:11.5px;font-weight:bold;line-height:13px;letter-spacing:1.3px;color:#dc9a84">www.fanpusoft.com</div></div></body></html>
